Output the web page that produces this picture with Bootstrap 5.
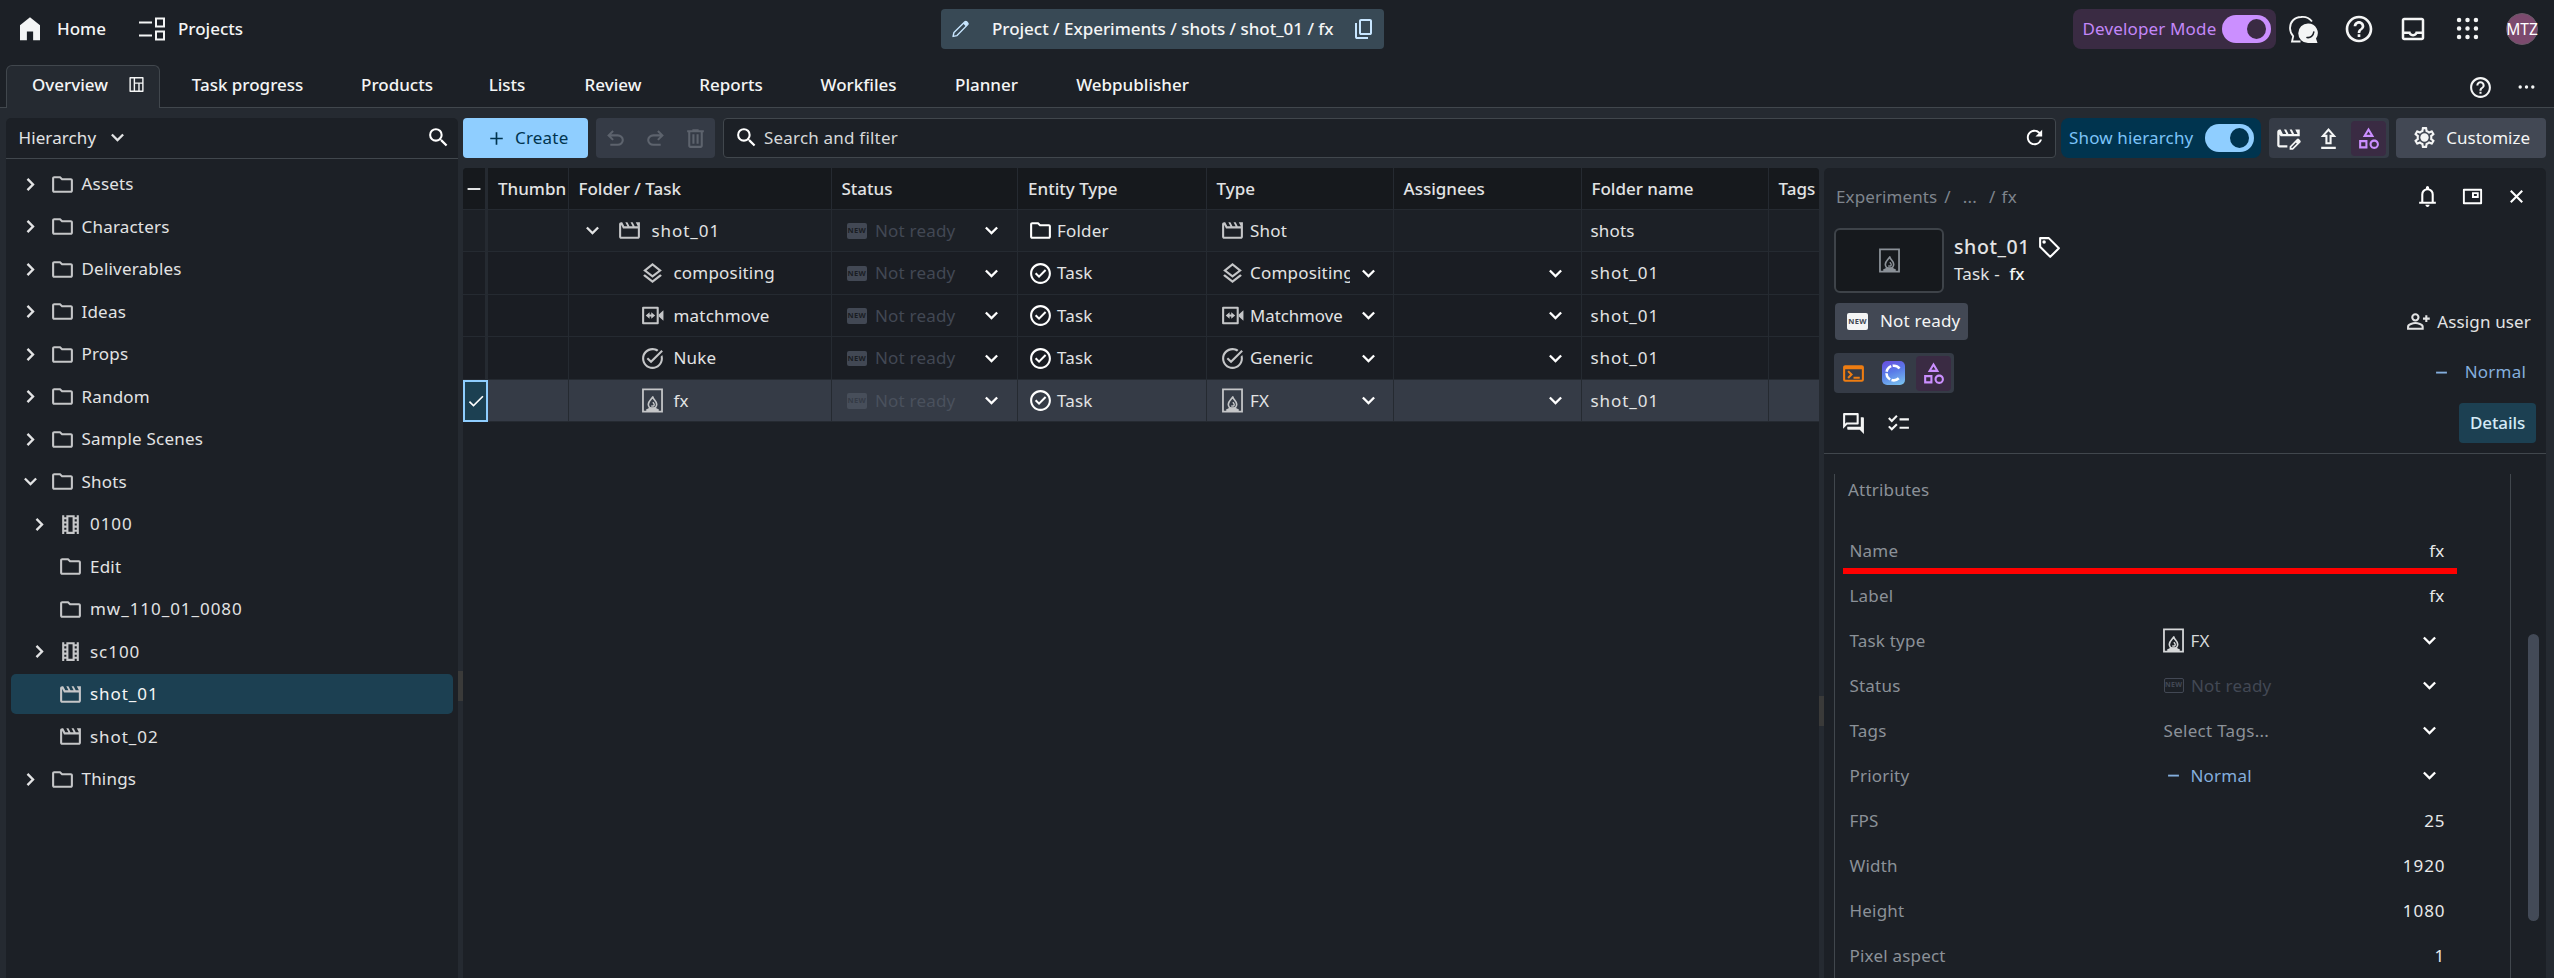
<!DOCTYPE html>
<html lang="en" data-bs-theme="dark">
<head>
<meta charset="utf-8">
<meta name="viewport" content="width=device-width, initial-scale=1">
<title>Experiments - Overview</title>
<link href="https://cdn.jsdelivr.net/npm/bootstrap@5.3.0/dist/css/bootstrap.min.css" rel="stylesheet">
<style>
:root{--bg:#1c2026;--surface:#252a31;--line:#41474d;--btn:#353b46;--btn2:#424854;--sel:#1c4052;--blue:#8fceff;--violet:#cb8fff;--violet-bg:#3a2b43;--muted:#8b9198}
html,body{height:100%}
body{background:var(--bg);color:#e2e3e4;font-family:"Noto Sans","Open Sans",sans-serif;font-size:17px;line-height:24px;letter-spacing:.2px;overflow:hidden}
svg{fill:currentColor;flex:none;display:block}
.i{width:25px;height:25px}.i-lg{width:30px;height:30px}.i-xl{width:32px;height:32px}.i-grey{color:#c5c6c8}
.med{font-weight:500;letter-spacing:0;color:#f4f5f5}
.idn{letter-spacing:.95px}
.app{height:978px}
/* top bar */
.topbar{height:58px;padding:0 16px 1px 15px;position:relative}
.crumbbar{position:absolute;left:941px;top:9px;width:443px;height:40px;background:#384955;border-radius:4px;padding:0 8px 1px 9px;color:#c8e6ff}
.dev{width:203px;height:40px;margin-top:1px;border-radius:8px;background:var(--violet-bg);color:#c387f8;padding:0 5px 1px 10px}
.toggle{width:49px;height:28px;border-radius:14px;background:var(--violet);padding:4px 5px}
.toggle i{display:block;width:19px;height:20px;border-radius:50%;margin-left:auto;background:var(--violet-bg)}
.toggle.blue{background:var(--blue)}.toggle.blue i{background:#00344f}
.avatar{width:32px;height:32px;border-radius:50%;background:#7c4a6e;border:1px solid #6a5a68;font-size:15.5px;color:#fff;letter-spacing:0}
/* tabs */
.tabs{height:50px;padding-top:7px;display:grid;grid-template-columns:6px 154px 175px 124px 96px 116px 120px 135px 121px 171px 1fr;border:0}
.tabs>div{border-bottom:1px solid var(--line);padding-bottom:3px}
.tabs .act{background:var(--surface);border:1px solid var(--line);border-bottom:0;border-radius:6px 6px 0 0;padding:0 12px 5px 25px}
/* body */
.work{background:var(--surface);height:870px;padding:10px 8px 0 6px}
.side{width:452px;background:var(--bg);border-radius:5px 5px 0 0}
.side-head{height:41px;border-bottom:1px solid var(--line);padding:0 7px 1px 12.5px}
.tree{padding:5px 5px 0}
.node{height:42.5px;padding:0}
.node>div{height:40px;border-radius:5px;display:grid;grid-template-columns:38.5px 32px 1fr;align-items:center;padding-left:0}
.node .i{margin-left:0}
.node .i:first-child{margin-left:7px}
.lv2>div{padding-left:8.5px}
.node .on{background:var(--sel);color:#f4f5f5}
.split{width:5px;display:flex;flex-direction:column;background:var(--surface)}
.split b{height:30px;background:#3a3a39}
.main{width:2083px}
.btn-x{height:40px;border-radius:4px;display:flex;align-items:center;border:0;color:#f4f5f5;letter-spacing:.2px;padding-bottom:1px}
.create{width:125px;background:var(--blue);color:#00344f;padding-left:25px}
.tools{width:119px;background:var(--btn);margin-left:8px;color:#5d636d;padding:0 7px}
.search{width:1333px;margin-left:8px;background:var(--bg);border:1px solid var(--line);padding:0 9px 1px 10px;color:#d6d8d9}
.hier{width:200px;margin-left:5px;background:#00344f;color:#7cc3f8;border-radius:8px;padding:0 7px 0 8px}
.grp{background:var(--btn);width:120px;margin-left:8px;padding:0 3px}
.cat{width:35px;height:35px;border-radius:4px;background:var(--violet-bg);color:var(--violet)}
.cust{width:150px;margin-left:7px;background:var(--btn2);padding:0 16px 1px 16px}
/* grid */
.gridwrap{width:1356px;height:810px;background:var(--bg);border-radius:4px 4px 0 0;overflow:hidden}
.g{display:grid;grid-template-columns:25px 80.5px 263px 186.5px 188.5px 187px 188px 187px 50.5px;height:42.5px;background:#1a1d23}
.g>div{border-right:1.5px solid var(--surface);border-bottom:1.5px solid var(--surface);display:flex;align-items:center;overflow:hidden;white-space:nowrap;padding-left:9px;padding-top:1px}
.g>div:first-child{border-right-width:3px;padding:0;justify-content:center}
.g>div:last-child{border-right:0}
.g.hd{background:#16191d;height:41.5px;font-weight:500;letter-spacing:0}
.g.hd>div{padding-left:10px;padding-top:2px}
.g.hd>div:first-child{padding:1px 0 0}
.g.fold{background:var(--bg)}
.g.pick{background:var(--btn)}
.g.pick>div:first-child{background:var(--sel);border:2px solid var(--blue);color:#fff}
.g .st{color:#424854;padding:1px 13px 0 15px}
.g .ty{padding:1px 12px 0 13px}
.g .ty span{overflow:hidden;width:100px;margin-left:5.5px}
.g .ty span.full{letter-spacing:0;font-size:16.800px}
.g .en{padding-left:10px}
.g .dn{padding-right:13px;justify-content:flex-end}
.g .t1{padding-left:11px}.g .t2{padding-left:71px}
.newb{font:700 7.5px/15px "Noto Sans",sans-serif;letter-spacing:.3px;width:20.5px;height:15.5px;border-radius:2px;background:#424854;color:#1a1d23;text-align:center;flex:none}
.pick .newb{background:#474e5a;color:#353b46}.pick .st{color:#4a515d}
/* details */
.det{width:722px;height:810px;background:var(--bg);border-radius:5px 5px 0 0;overflow:hidden}
.det-top{height:286px;border-bottom:1.5px solid var(--line);padding:0 10px}
.thumb{width:110px;height:65px;border:2px solid #3e4349;border-radius:6px;background:#16191d;color:#8b9198}
.stat{width:133px;height:37px;background:var(--btn2);border-radius:4px;padding-left:12px;padding-bottom:1px}
.grp2{width:120px;height:40px;background:var(--btn);border-radius:4px;padding:0 3px 0 7px}
.cica{width:23px;height:24px;border-radius:5px;background:linear-gradient(160deg,#6a4be0,#5a7be8 45%,#7cc8f0);margin:0 11px 0 15.5px;flex:none}
.detbtn{width:77px;height:40px;border-radius:4px;background:var(--sel);color:#d5eaf5;font-weight:500;letter-spacing:-.1px;padding-bottom:1px}
.attrs{margin-left:10px;margin-top:20px;width:677px;height:504px;border:1.5px solid var(--line);border-width:0 1.5px;color:var(--muted)}
.arow{height:45px;display:grid;grid-template-columns:314px 260px 20px;align-items:center;padding-left:14.5px;padding-bottom:1px;position:relative}
.arow .v{grid-column:2/4;justify-self:end;color:#e8e9ea;margin-right:-1px}
.arow .v.idn{margin-right:-2px}
.arow .i.dn2{color:#fff;margin-left:-7px}
.mark-red{position:absolute;left:8px;top:39.500px;width:614px;height:6px;background:#f00}
.bar{width:11px;height:287px;border-radius:6px;background:#434a57;margin:180px 0 0 17px}
.lb{color:#84aedd}
</style>
<script src="https://cdn.jsdelivr.net/npm/bootstrap@5.3.0/dist/js/bootstrap.bundle.min.js"></script>
</head>
<body>
<svg width="0" height="0" class="position-absolute">
<symbol id="home" viewBox="0 0 24 24"><path d="M4 21V9l8-6.5L20 9v12h-5.500v-7h-5v7z"/></symbol>
<symbol id="proj" viewBox="0 0 26 24"><path d="M0 4.500h13v2H0zM0 17.500h13v2H0z"/><path fill="none" stroke="currentColor" stroke-width="2" d="M17 1.500h8v8h-8zM17 14.500h8v8h-8z"/></symbol>
<symbol id="folder" viewBox="0 0 24 24"><path d="M9.170 6l2 2H20v10H4V6h5.170M10 4H4c-1.100 0-2 .9-2 2v12c0 1.100.9 2 2 2h16c1.100 0 2-.9 2-2V8c0-1.100-.9-2-2-2h-8l-2-2z"/></symbol>
<symbol id="down" viewBox="0 0 24 24"><path d="M7.400 8.300 12 12.900l4.600-4.600L18.200 9.900 12 16 5.800 9.900z"/></symbol>
<symbol id="right" viewBox="0 0 24 24"><path d="M8.300 16.600 12.900 12 8.300 7.400 9.900 5.800 16 12l-6.100 6.200z"/></symbol>
<symbol id="movie" viewBox="0 0 24 24"><path d="M4 6.470 5.760 10H20v8H4V6.470M22 4h-4l2 4h-3l-2-4h-2l2 4h-3l-2-4H8l2 4H7L5 4H4c-1.100 0-1.990.9-1.990 2L2 18c0 1.100.9 2 2 2h16c1.100 0 2-.9 2-2V4z"/></symbol>
<symbol id="strip" viewBox="0 0 24 24"><path d="M18 3v2h-2V3H8v2H6V3H4v18h2v-2h2v2h8v-2h2v2h2V3h-2zM8 17H6v-2h2v2zm0-4H6v-2h2v2zm0-4H6V7h2v2zm6 10h-4V5h4v14zm4-2h-2v-2h2v2zm0-4h-2v-2h2v2zm0-4h-2V7h2v2z"/></symbol>
<symbol id="layers" viewBox="0 0 24 24"><path d="M11.990 18.540l-7.370-5.730L3 14.070l9 7 9-7-1.630-1.270-7.380 5.740zM12 16l7.360-5.730L21 9l-9-7-9 7 1.630 1.270L12 16zm0-11.470L17.740 9 12 13.470 6.260 9 12 4.530z"/></symbol>
<symbol id="camera" viewBox="0 0 24 24"><path fill="none" stroke="currentColor" stroke-width="2" d="M3 4.500h14v15H3z" stroke-linejoin="round"/><path d="M18 11l4.500-4v10L18 13zM9.200 8.800v2.200h1.600V8.800l3.700 3.200-3.700 3.200V13H9.200v2.200L5.500 12z"/></symbol>
<symbol id="taskalt" viewBox="0 0 24 24"><path d="M22 5.180 10.590 16.600l-4.240-4.240 1.410-1.410 2.830 2.830 10-10L22 5.180zm-2.210 5.040c.13.570.21 1.170.21 1.780 0 4.420-3.580 8-8 8s-8-3.580-8-8 3.580-8 8-8c1.580 0 3.040.46 4.280 1.250l1.440-1.440C16.100 2.670 14.130 2 12 2 6.480 2 2 6.480 2 12s4.480 10 10 10 10-4.480 10-10c0-1.190-.22-2.330-.6-3.390l-1.610 1.610z"/></symbol>
<symbol id="check" viewBox="0 0 24 24"><path d="M12 2C6.480 2 2 6.480 2 12s4.480 10 10 10 10-4.480 10-10S17.520 2 12 2zm0 18c-4.410 0-8-3.590-8-8s3.590-8 8-8 8 3.590 8 8-3.590 8-8 8zm4.200-12L10.600 13.600 8 11l-1.400 1.400 4 4 7-7z"/></symbol>
<symbol id="tick" viewBox="0 0 24 24"><path d="M9 16.170 4.830 12l-1.420 1.410L9 19 21 7l-1.410-1.410z"/></symbol>
<symbol id="fire" viewBox="0 0 24 24"><g fill="none" stroke="currentColor"><path stroke-width="1.700" d="M2.850 1.350h18.300v21.300H2.850z"/><path stroke-width="1.600" stroke-linejoin="round" d="M12.300 8.500c.2 2.700 3.700 3.800 3.700 7.200 0 2.400-1.800 4-4 4s-4-1.600-4-4c0-3 2.800-4.500 4.300-7.200z"/><path stroke-width="1.400" d="M12.600 13.500c.2 1.200 1.200 1.500 1 2.800-.3 1.300-2 1.400-2.600.5"/></g><path d="M6 22.500v-2l2-.8.800-1.200h6.400l.8 1.200 2 .8v2z"/></symbol>
<symbol id="help" viewBox="0 0 24 24"><path d="M11 18h2v-2h-2v2zm1-16C6.480 2 2 6.480 2 12s4.480 10 10 10 10-4.480 10-10S17.520 2 12 2zm0 18c-4.410 0-8-3.590-8-8s3.590-8 8-8 8 3.590 8 8-3.590 8-8 8zm0-14c-2.210 0-4 1.790-4 4h2c0-1.100.9-2 2-2s2 .9 2 2c0 2-3 1.750-3 5h2c0-2.250 3-2.500 3-5 0-2.210-1.790-4-4-4z"/></symbol>
<symbol id="inbox" viewBox="0 0 24 24"><path d="M19 3H5c-1.100 0-2 .9-2 2v14c0 1.100.9 2 2 2h14c1.100 0 2-.9 2-2V5c0-1.100-.9-2-2-2zm0 16H5v-3h3.560c.69 1.190 1.970 2 3.450 2s2.750-.81 3.450-2H19v3zm0-5h-4.990c0 1.100-.9 2-2 2s-2-.9-2-2H5V5h14v9z"/></symbol>
<symbol id="apps" viewBox="0 0 24 24"><path fill="none" stroke="currentColor" stroke-width="4" stroke-linecap="round" d="M4.500 4.500h0M12 4.500h0M19.500 4.500h0M4.500 12h0M12 12h0M19.500 12h0M4.500 19.500h0M12 19.500h0M19.500 19.500h0"/></symbol>
<symbol id="chat" viewBox="0 0 30 28"><path fill="none" stroke="currentColor" stroke-width="1.800" d="M24 6.500A12 12 0 0 0 13 2C6.500 2 2 7 2 13c0 3.500 1.300 6 3.200 8.200L4 26.500h8.500"/><path d="M20 8.500a9.500 9.500 0 0 1 8 15L29.500 28H20a9.700 9.700 0 0 1 0-19.500z"/><path fill="none" stroke="#1c2026" stroke-width="1.600" stroke-linecap="round" d="M19 22.500c3.500.5 6.300-1.500 6.800-5.500"/></symbol>
<symbol id="search" viewBox="0 0 24 24"><path d="M15.500 14h-.79l-.28-.27A6.471 6.471 0 0 0 16 9.500 6.500 6.500 0 1 0 9.500 16c1.610 0 3.090-.59 4.230-1.570l.27.28v.79l5 4.990L20.490 19l-4.990-5zm-6 0C7.010 14 5 11.990 5 9.500S7.010 5 9.500 5 14 7.010 14 9.500 11.990 14 9.500 14z"/></symbol>
<symbol id="refresh" viewBox="0 0 24 24"><path d="M17.650 6.350A7.958 7.958 0 0 0 12 4c-4.420 0-7.990 3.580-7.990 8s3.570 8 7.990 8c3.730 0 6.840-2.550 7.730-6h-2.080A5.990 5.990 0 0 1 12 18c-3.310 0-6-2.690-6-6s2.690-6 6-6c1.660 0 3.140.69 4.220 1.780L13 11h7V4l-2.350 2.350z"/></symbol>
<symbol id="undo" viewBox="0 0 24 24"><path d="M7 19v-2h7.100q1.575 0 2.738-1T18 13.500 16.838 11 14.100 10H7.800l2.600 2.600L9 14 4 9l5-5 1.400 1.400L7.800 8h6.300q2.425 0 4.163 1.575T20 13.500t-1.737 3.925T14.100 19z"/></symbol>
<symbol id="trash" viewBox="0 0 24 24"><path d="M7 21q-.825 0-1.412-.587T5 19V6H4V4h5V3h6v1h5v2h-1v13q0 .825-.587 1.413T17 21zM17 6H7v13h10zM9 17h2V8H9zm4 0h2V8h-2z" fill-rule="evenodd"/></symbol>
<symbol id="copy" viewBox="0 0 24 24"><path fill-rule="evenodd" d="M9 18q-.825 0-1.412-.587T7 16V4q0-.825.588-1.412T9 2h9q.825 0 1.413.588T20 4v12q0 .825-.587 1.413T18 18zm0-2h9V4H9zm-4 6q-.825 0-1.412-.587T3 20V6h2v14h11v2z"/></symbol>
<symbol id="pencil" viewBox="0 0 24 24"><path fill="none" stroke="currentColor" stroke-width="1.600" stroke-linejoin="round" d="M3.500 20.500l1-4.500L17 3.800c.6-.6 1.400-.6 2 0l1.200 1.200c.6.6.6 1.400 0 2L8 19.500z"/><path d="M15 5.700l3.300-2.400 2.400 2.400L18.300 9z"/></symbol>
<symbol id="upload" viewBox="0 0 24 24"><path d="M5 22h14v-2H5v2zM4.500 10.500H9v7h6v-7h4.500L12 2zm8.500-2v7h-2v-7H8.800L12 5l3.200 3.500z"/></symbol>
<symbol id="clapedit" viewBox="0 0 24 24"><path d="M22 4h-4l2 4h-3l-2-4h-2l2 4h-3l-2-4H8l2 4H7L5 4H4c-1.100 0-1.990.9-1.990 2L2 18c0 1.100.9 2 2 2h7v-2H4V8.500L5 10h17z"/><path fill-rule="evenodd" d="M13 22v-3l6.300-6.300c.8-.8 1.500-.8 2.200 0l.8.800c.8.800.8 1.500 0 2.200L16 22zm1.600-1.600h.8l4-4-.8-.8-4 4z"/></symbol>
<symbol id="shapes" viewBox="0 0 24 24"><path d="M12 1.500l-5.500 9h11L12 1.500zm0 3.840L13.930 8.500h-3.870L12 5.340zM17.500 13c-2.490 0-4.500 2.010-4.500 4.500s2.010 4.500 4.500 4.500 4.500-2.010 4.500-4.500-2.010-4.500-4.500-4.500zm0 7a2.500 2.500 0 0 1 0-5 2.500 2.500 0 0 1 0 5zM3 21.500h8v-8H3v8zm2-6h4v4H5v-4z"/></symbol>
<symbol id="gear" viewBox="0 0 24 24"><path fill-rule="evenodd" d="M19.430 12.980c.04-.32.07-.64.07-.98 0-.34-.03-.66-.07-.98l2.110-1.650c.19-.15.24-.42.12-.64l-2-3.460c-.09-.16-.26-.25-.44-.25-.06 0-.12.010-.17.030l-2.490 1c-.52-.4-1.080-.73-1.690-.98l-.38-2.650A.488.488 0 0 0 14 2h-4c-.25 0-.46.18-.49.42l-.38 2.650c-.61.25-1.170.59-1.690.98l-2.490-1c-.06-.02-.12-.03-.18-.03-.17 0-.34.09-.43.25l-2 3.460c-.13.22-.07.49.12.64l2.110 1.650c-.04.32-.07.65-.07.98 0 .33.03.66.07.98l-2.110 1.650c-.19.15-.24.42-.12.64l2 3.460c.09.16.26.25.44.25.06 0 .12-.01.17-.03l2.490-1c.52.4 1.080.73 1.690.98l.38 2.650c.03.24.24.42.49.42h4c.25 0 .46-.18.49-.42l.38-2.650c.61-.25 1.170-.59 1.690-.98l2.490 1c.06.02.12.03.18.03.17 0 .34-.09.43-.25l2-3.460c.12-.22.07-.49-.12-.64l-2.110-1.650zm-1.980-1.710c.04.31.05.52.05.73 0 .21-.02.43-.05.73l-.14 1.130.89.7 1.080.84-.7 1.210-1.270-.51-1.040-.42-.9.680c-.43.32-.84.56-1.250.73l-1.060.43-.16 1.130-.2 1.350h-1.400l-.19-1.350-.16-1.130-1.060-.43c-.43-.18-.83-.41-1.230-.71l-.91-.7-1.060.43-1.270.51-.7-1.210 1.080-.84.89-.7-.14-1.130c-.03-.31-.05-.54-.05-.74s.02-.43.05-.73l.14-1.130-.89-.7-1.080-.84.7-1.210 1.270.51 1.040.42.9-.68c.43-.32.84-.56 1.250-.73l1.060-.43.16-1.130.2-1.350h1.390l.19 1.350.16 1.130 1.060.43c.43.18.83.41 1.230.71l.91.7 1.060-.43 1.270-.51.7 1.210-1.070.85-.89.7.14 1.130z"/><circle cx="12" cy="12" r="4"/></symbol>
<symbol id="bell" viewBox="0 0 24 24"><path fill-rule="evenodd" d="M4 19v-2h2v-7q0-2.075 1.250-3.687T10.500 4.200v-.7q0-.625.438-1.062T12 2t1.063.438.437 1.062v.7q2 .5 3.250 2.113T18 10v7h2v2zm8 3q-.825 0-1.412-.587T10 20h4q0 .825-.587 1.413T12 22M8 17h8v-7q0-1.650-1.175-2.825T12 6 9.175 7.175 8 10z"/></symbol>
<symbol id="pip" viewBox="0 0 24 24"><path fill="none" stroke="currentColor" stroke-width="2" stroke-linejoin="round" d="M3 5h18v14H3z"/><path fill="none" stroke="currentColor" stroke-width="2" d="M12.500 8.500h5v4h-5z"/></symbol>
<symbol id="close" viewBox="0 0 24 24"><path fill="none" stroke="currentColor" stroke-width="2" d="M6.500 6.500l11 11M17.500 6.500l-11 11"/></symbol>
<symbol id="tag" viewBox="0 0 24 24"><path fill="none" stroke="currentColor" stroke-width="2" stroke-linejoin="round" d="M3 3h8.300L21 12.700 12.700 21 3 11.300z"/><circle cx="6.800" cy="6.800" r="1.700"/></symbol>
<symbol id="puser" viewBox="0 0 24 24"><g fill="none" stroke="currentColor" stroke-width="2"><circle cx="9" cy="8" r="3"/><path d="M2 19v-2c0-2.500 5-3.500 7-3.500s7 1 7 3.500v2zM19.500 6v6.500M16.300 9.200h6.500"/></g></symbol>
<symbol id="term" viewBox="0 0 24 24"><path fill-rule="evenodd" d="M4 4h16a2 2 0 0 1 2 2v12a2 2 0 0 1-2 2H4a2 2 0 0 1-2-2V6c0-1.100.9-2 2-2zm0 4v10h16V8zm3.500 9-1.400-1.400L8.700 13 6.100 10.400 7.500 9l4 4zM12 17v-2h6v2z"/></symbol>
<symbol id="forum" viewBox="0 0 24 24"><path d="M15 4v7H5.170L4 12.170V4h11m1-2H3c-.55 0-1 .45-1 1v14l4-4h10c.55 0 1-.45 1-1V3c0-.55-.45-1-1-1zm5 4h-2v9H6v2c0 .55.45 1 1 1h11l4 4V7c0-.55-.45-1-1-1z"/></symbol>
<symbol id="list" viewBox="0 0 24 24"><path d="M22 7h-9v2h9V7zm0 8h-9v2h9v-2zM5.540 11 2 7.460l1.410-1.410 2.120 2.120 4.240-4.240 1.410 1.410L5.540 11zm0 8L2 15.460l1.410-1.410 2.120 2.120 4.240-4.240 1.410 1.410L5.540 19z"/></symbol>
<symbol id="layout" viewBox="0 0 24 24"><path fill="none" stroke="currentColor" stroke-width="2" stroke-linejoin="round" d="M3 2.500h18v19H3zM9 2.500v19M9 10h12M15.500 10v11.500"/></symbol>
<symbol id="plus" viewBox="0 0 24 24"><path d="M11.200 6h1.600v5.200H18v1.600h-5.200V18h-1.600v-5.200H6v-1.600h5.200z"/></symbol>
<symbol id="minus" viewBox="0 0 24 24"><path d="M6.800 11.200h10.400V13H6.800z"/></symbol>
<symbol id="dash" viewBox="0 0 24 24"><path d="M5 11h14v2H5z"/></symbol>
</svg>

<div class="app d-flex flex-column">
<header class="topbar d-flex align-items-center med">
  <svg class="i-lg"><use href="#home"/></svg><span style="margin-left:12px">Home</span>
  <svg width="26" height="24" style="margin-left:33px"><use href="#proj"/></svg><span style="margin-left:13px">Projects</span>
  <div class="crumbbar d-flex align-items-center"><svg style="width:21px;height:22px"><use href="#pencil"/></svg><span class="med" style="margin-left:21px;letter-spacing:-.02px">Project / Experiments / shots / shot_01 / fx</span><svg class="ms-auto" style="width:24px;height:24px"><use href="#copy"/></svg></div>
  <div class="dev d-flex align-items-center justify-content-between ms-auto fw-normal"><span style="letter-spacing:.15px">Developer Mode</span><div class="toggle"><i></i></div></div>
  <svg width="30" height="28" style="margin-left:12px"><use href="#chat"/></svg>
  <svg class="i-xl" style="margin-left:25px"><use href="#help"/></svg>
  <svg class="i-lg" style="margin-left:23px"><use href="#inbox"/></svg>
  <svg style="margin-left:26.5px;width:27px;height:27px"><use href="#apps"/></svg>
  <div class="avatar d-flex align-items-center justify-content-center fw-normal" style="margin-left:25px">MTZ</div>
</header>

<nav class="tabs med">
  <div></div>
  <div class="act d-flex align-items-center justify-content-between"><span>Overview</span><svg style="width:21px;height:17px"><use href="#layout"/></svg></div>
  <div class="d-flex align-items-center justify-content-center">Task progress</div>
  <div class="d-flex align-items-center justify-content-center">Products</div>
  <div class="d-flex align-items-center justify-content-center">Lists</div>
  <div class="d-flex align-items-center justify-content-center">Review</div>
  <div class="d-flex align-items-center justify-content-center">Reports</div>
  <div class="d-flex align-items-center justify-content-center">Workfiles</div>
  <div class="d-flex align-items-center justify-content-center">Planner</div>
  <div class="d-flex align-items-center justify-content-center">Webpublisher</div>
  <div class="d-flex align-items-center justify-content-end" style="padding:2px 19px 0 0"><svg class="i"><use href="#help"/></svg><svg width="17" height="6" viewBox="0 0 17 6" style="margin-left:25px"><circle cx="2.200" cy="3" r="1.700"/><circle cx="8.500" cy="3" r="1.700"/><circle cx="14.800" cy="3" r="1.700"/></svg></div>
</nav>

<div class="work d-flex">
  <aside class="side">
    <div class="side-head d-flex align-items-center"><span style="letter-spacing:.1px">Hierarchy</span><svg class="i" style="margin-left:9px"><use href="#down"/></svg><svg class="i ms-auto text-white"><use href="#search"/></svg></div>
    <div class="tree">
      <div class="node"><div><svg class="i"><use href="#right"/></svg><svg class="i i-grey"><use href="#folder"/></svg><span>Assets</span></div></div>
      <div class="node"><div><svg class="i"><use href="#right"/></svg><svg class="i i-grey"><use href="#folder"/></svg><span>Characters</span></div></div>
      <div class="node"><div><svg class="i"><use href="#right"/></svg><svg class="i i-grey"><use href="#folder"/></svg><span>Deliverables</span></div></div>
      <div class="node"><div><svg class="i"><use href="#right"/></svg><svg class="i i-grey"><use href="#folder"/></svg><span>Ideas</span></div></div>
      <div class="node"><div><svg class="i"><use href="#right"/></svg><svg class="i i-grey"><use href="#folder"/></svg><span>Props</span></div></div>
      <div class="node"><div><svg class="i"><use href="#right"/></svg><svg class="i i-grey"><use href="#folder"/></svg><span>Random</span></div></div>
      <div class="node"><div><svg class="i"><use href="#right"/></svg><svg class="i i-grey"><use href="#folder"/></svg><span>Sample Scenes</span></div></div>
      <div class="node"><div><svg class="i"><use href="#down"/></svg><svg class="i i-grey"><use href="#folder"/></svg><span>Shots</span></div></div>
      <div class="node lv2"><div><svg class="i"><use href="#right"/></svg><svg class="i i-grey"><use href="#strip"/></svg><span class="idn">0100</span></div></div>
      <div class="node lv2"><div><i></i><svg class="i i-grey"><use href="#folder"/></svg><span>Edit</span></div></div>
      <div class="node lv2"><div><i></i><svg class="i i-grey"><use href="#folder"/></svg><span class="idn">mw_110_01_0080</span></div></div>
      <div class="node lv2"><div><svg class="i"><use href="#right"/></svg><svg class="i i-grey"><use href="#strip"/></svg><span class="idn">sc100</span></div></div>
      <div class="node lv2"><div class="on"><i></i><svg class="i i-grey"><use href="#movie"/></svg><span class="idn">shot_01</span></div></div>
      <div class="node lv2"><div><i></i><svg class="i i-grey"><use href="#movie"/></svg><span class="idn">shot_02</span></div></div>
      <div class="node"><div><svg class="i"><use href="#right"/></svg><svg class="i i-grey"><use href="#folder"/></svg><span>Things</span></div></div>
    </div>
  </aside>
  <div class="split"><b style="margin-top:553px"></b></div>
  <main class="main">
    <div class="d-flex" style="height:50px">
      <button class="btn-x create"><svg class="i" style="margin-left:-4px"><use href="#plus"/></svg><span style="margin-left:6px">Create</span></button>
      <div class="btn-x tools justify-content-between"><svg class="i"><use href="#undo"/></svg><svg class="i" style="transform:scaleX(-1)"><use href="#undo"/></svg><svg class="i"><use href="#trash"/></svg></div>
      <div class="btn-x search"><svg class="i text-white"><use href="#search"/></svg><span style="margin-left:5px">Search and filter</span><svg class="ms-auto text-white" style="width:23px;height:23px"><use href="#refresh"/></svg></div>
      <div class="btn-x hier justify-content-between"><span style="letter-spacing:.15px">Show hierarchy</span><div class="toggle blue"><i></i></div></div>
      <div class="btn-x grp justify-content-between"><svg style="width:27px;height:27px;margin-left:3px"><use href="#clapedit"/></svg><svg class="i" style="margin-left:3px"><use href="#upload"/></svg><span class="cat d-flex align-items-center justify-content-center"><svg class="i"><use href="#shapes"/></svg></span></div>
      <button class="btn-x cust justify-content-between"><svg class="i"><use href="#gear"/></svg><span style="letter-spacing:0">Customize</span></button>
    </div>
    <div class="d-flex">
      <div class="gridwrap">
        <div class="g hd"><div><svg style="width:22px;height:22px"><use href="#dash"/></svg></div><div>Thumbn</div><div>Folder / Task</div><div>Status</div><div>Entity Type</div><div>Type</div><div>Assignees</div><div>Folder name</div><div>Tags</div></div>
        <div class="g fold"><div></div><div></div><div class="t1"><svg class="i"><use href="#down"/></svg><svg class="i i-grey" style="margin-left:12px"><use href="#movie"/></svg><span class="idn" style="margin-left:10px">shot_01</span></div><div class="st"><span class="newb">NEW</span><span class="ms-2">Not ready</span><svg class="i ms-auto text-white"><use href="#down"/></svg></div><div class="en"><svg class="i text-white"><use href="#folder"/></svg><span style="margin-left:4px">Folder</span></div><div class="ty"><svg class="i i-grey"><use href="#movie"/></svg><span>Shot</span></div><div></div><div>shots</div><div></div></div>
        <div class="g"><div></div><div></div><div class="t2"><svg class="i i-grey"><use href="#layers"/></svg><span style="margin-left:9px">compositing</span></div><div class="st"><span class="newb">NEW</span><span class="ms-2">Not ready</span><svg class="i ms-auto text-white"><use href="#down"/></svg></div><div class="en"><svg class="i text-white"><use href="#check"/></svg><span style="margin-left:4px">Task</span></div><div class="ty"><svg class="i i-grey"><use href="#layers"/></svg><span>Compositing</span><svg class="i ms-auto text-white"><use href="#down"/></svg></div><div class="dn"><svg class="i text-white"><use href="#down"/></svg></div><div class="idn">shot_01</div><div></div></div>
        <div class="g"><div></div><div></div><div class="t2"><svg class="i i-grey"><use href="#camera"/></svg><span style="margin-left:9px">matchmove</span></div><div class="st"><span class="newb">NEW</span><span class="ms-2">Not ready</span><svg class="i ms-auto text-white"><use href="#down"/></svg></div><div class="en"><svg class="i text-white"><use href="#check"/></svg><span style="margin-left:4px">Task</span></div><div class="ty"><svg class="i i-grey"><use href="#camera"/></svg><span class="full">Matchmove</span><svg class="i ms-auto text-white"><use href="#down"/></svg></div><div class="dn"><svg class="i text-white"><use href="#down"/></svg></div><div class="idn">shot_01</div><div></div></div>
        <div class="g"><div></div><div></div><div class="t2"><svg class="i i-grey"><use href="#taskalt"/></svg><span style="margin-left:9px">Nuke</span></div><div class="st"><span class="newb">NEW</span><span class="ms-2">Not ready</span><svg class="i ms-auto text-white"><use href="#down"/></svg></div><div class="en"><svg class="i text-white"><use href="#check"/></svg><span style="margin-left:4px">Task</span></div><div class="ty"><svg class="i i-grey"><use href="#taskalt"/></svg><span>Generic</span><svg class="i ms-auto text-white"><use href="#down"/></svg></div><div class="dn"><svg class="i text-white"><use href="#down"/></svg></div><div class="idn">shot_01</div><div></div></div>
        <div class="g pick"><div><svg style="width:20px;height:20px"><use href="#tick"/></svg></div><div></div><div class="t2"><svg class="i i-grey"><use href="#fire"/></svg><span style="margin-left:9px">fx</span></div><div class="st"><span class="newb">NEW</span><span class="ms-2">Not ready</span><svg class="i ms-auto text-white"><use href="#down"/></svg></div><div class="en"><svg class="i text-white"><use href="#check"/></svg><span style="margin-left:4px">Task</span></div><div class="ty"><svg class="i i-grey"><use href="#fire"/></svg><span>FX</span><svg class="i ms-auto text-white"><use href="#down"/></svg></div><div class="dn"><svg class="i text-white"><use href="#down"/></svg></div><div class="idn">shot_01</div><div></div></div>
      </div>
      <div class="split" style="height:810px"><b style="margin-top:528px"></b></div>
      <section class="det">
        <div class="det-top">
          <div class="d-flex align-items-center" style="height:57px;color:#7f858d;padding-left:2px"><span style="letter-spacing:.1px">Experiments</span><span style="margin-left:7px">/</span><span style="margin-left:12px">...</span><span style="margin-left:12px">/</span><span style="margin-left:6px">fx</span>
            <svg class="i ms-auto text-white"><use href="#bell"/></svg><svg style="width:23px;height:23px;margin-left:21px" class="text-white"><use href="#pip"/></svg><svg class="i text-white" style="margin:0 7.500px 0 20px"><use href="#close"/></svg></div>
          <div class="d-flex" style="margin-top:3px"><div class="thumb d-flex align-items-center justify-content-center"><svg class="i"><use href="#fire"/></svg></div>
            <div style="margin-left:10px;padding-top:6px"><div class="d-flex align-items-center" style="height:26px"><span class="med" style="font-size:19.5px;letter-spacing:.6px;color:#e2e3e4">shot_01</span><svg class="i text-white" style="margin-left:7px"><use href="#tag"/></svg></div><div style="margin-top:2px">Task -&nbsp; <span class="med">fx</span></div></div></div>
          <div class="d-flex align-items-center justify-content-between" style="margin-top:10px;height:37px;padding-right:5px"><div class="stat d-flex align-items-center" style="margin-left:1px"><span class="newb" style="background:#f4f5f5;color:#424854;width:21px;height:17px;line-height:17px">NEW</span><span style="margin-left:12px;color:#f4f5f5">Not ready</span></div><div class="d-flex align-items-center"><svg class="i"><use href="#puser"/></svg><span style="margin-left:6px;letter-spacing:.15px">Assign user</span></div></div>
          <div class="d-flex align-items-center justify-content-between" style="margin-top:13px;height:40px;padding-right:10px"><div class="grp2 d-flex align-items-center"><svg class="i" style="color:#ee7d12"><use href="#term"/></svg><span class="cica"><svg width="23" height="24" viewBox="0 0 23 24"><path d="M17.500 7.500A7.300 7.300 0 1 0 17.500 16.500" fill="none" stroke="#fff" stroke-width="2.600" stroke-dasharray="7.500 1.500"/></svg></span><span class="cat d-flex align-items-center justify-content-center"><svg class="i"><use href="#shapes"/></svg></span></div><div class="d-flex align-items-center lb" style="margin-top:-2px"><svg class="i"><use href="#minus"/></svg><span style="margin-left:11px">Normal</span></div></div>
          <div class="d-flex align-items-center" style="margin-top:10px;height:40px;padding-left:7px;color:#f4f5f5"><svg class="i"><use href="#forum"/></svg><svg class="i" style="margin-left:20px"><use href="#list"/></svg><div class="detbtn ms-auto d-flex align-items-center justify-content-center">Details</div></div>
        </div>
        <div class="d-flex">
          <div class="attrs">
            <div style="padding:4px 0 0 13px;height:54.500px">Attributes</div>
            <div class="arow"><span>Name</span><span class="v">fx</span><span class="mark-red"></span></div>
            <div class="arow"><span>Label</span><span class="v">fx</span></div>
            <div class="arow"><span>Task type</span><span class="d-flex align-items-center" style="color:#d6d8d9;margin-left:-3px"><svg class="i"><use href="#fire"/></svg><span style="margin-left:5px">FX</span></span><svg class="i dn2"><use href="#down"/></svg></div>
            <div class="arow"><span>Status</span><span class="d-flex align-items-center" style="color:#424854"><span class="newb" style="background:none;border:1.500px solid #424854;color:#424854;line-height:12.500px;font-size:7px">NEW</span><span style="margin-left:7px">Not ready</span></span><svg class="i dn2"><use href="#down"/></svg></div>
            <div class="arow"><span>Tags</span><span style="letter-spacing:.3px">Select Tags...</span><svg class="i dn2"><use href="#down"/></svg></div>
            <div class="arow"><span>Priority</span><span class="d-flex align-items-center lb" style="margin-left:-3px"><svg class="i"><use href="#minus"/></svg><span style="margin-left:5px">Normal</span></span><svg class="i dn2"><use href="#down"/></svg></div>
            <div class="arow"><span>FPS</span><span class="v idn">25</span></div>
            <div class="arow"><span>Width</span><span class="v idn">1920</span></div>
            <div class="arow"><span>Height</span><span class="v idn">1080</span></div>
            <div class="arow"><span>Pixel aspect</span><span class="v">1</span></div>
          </div>
          <div class="bar"></div>
        </div>
      </section>
    </div>
  </main>
</div>
</div>
</body>
</html>
